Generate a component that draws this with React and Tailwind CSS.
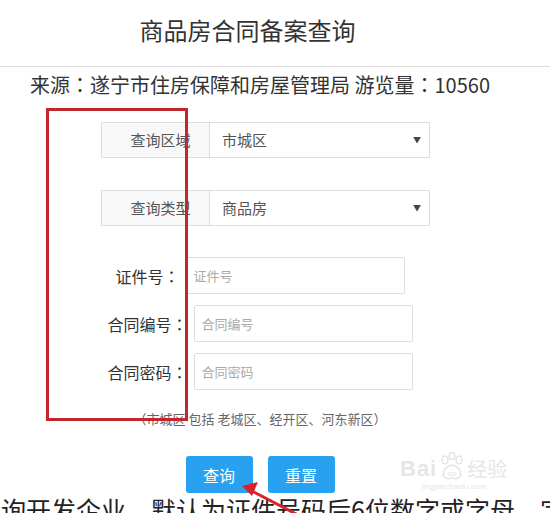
import React from "react"

const font = { fontFamily: '"Noto Sans CJK SC", "Noto Sans", sans-serif' }

// centred fullwidth colon, as in the screenshot's font
const Colon = () => <span style={{ fontFamily: '"Noto Sans CJK JP", sans-serif' }}>：</span>

const SelectRow = ({ label, value, className = "" }) => (
  <div className={`ml-[101px] flex h-[36px] w-[329px] text-[15px] text-[#555] ${className}`}>
    <div className="flex w-[109px] items-center justify-center border border-[#ddd] bg-[#f8f8f8] pl-[10px]">
      {label}
    </div>
    <div className="-ml-px flex flex-1 items-center justify-between border border-[#ddd] bg-white pl-[12px] pr-[8px]">
      <span>{value}</span>
      <span className="text-[8px] text-[#444]">▼</span>
    </div>
  </div>
)

const InputRow = ({ label, placeholder, className = "" }) => (
  <div className={`flex items-center justify-center gap-[6px] ${className}`}>
    <span className="text-[16px] text-[#333]">
      {label}
      <Colon />
    </span>
    <div className="flex h-[37px] w-[219px] items-center rounded-[2px] border border-[#ddd] bg-white px-[7px] text-left text-[13px] text-[#aaa]">
      {placeholder}
    </div>
  </div>
)

export default function App() {
  return (
    <div className="relative h-[513px] w-[550px] overflow-hidden bg-white" style={font}>
      {/* Header */}
      <div className="box-border h-[67px] border-b border-[#ddd]">
        <div className="w-[520px] pr-[25px] pt-[12px] text-center text-[24px] leading-[36px] text-[#333]">
          商品房合同备案查询
        </div>
      </div>

      <div className="w-[520px]">
        <div className="mt-[4px] text-center text-[20px] leading-[28px] text-[#333]">
          来源<Colon />遂宁市住房保障和房屋管理局 游览量<Colon />10560
        </div>

        <SelectRow label="查询区域" value="市城区" className="mt-[23px]" />
        <SelectRow label="查询类型" value="商品房" className="mt-[32px]" />

        <InputRow label="证件号" placeholder="证件号" className="mt-[31px]" />
        <InputRow label="合同编号" placeholder="合同编号" className="mt-[11px]" />
        <InputRow label="合同密码" placeholder="合同密码" className="mt-[11px]" />

        <div className="mt-[19px] text-center text-[13px] leading-[20px] text-[#666]">
          （市城区 包括 老城区、经开区、河东新区）
        </div>

        <div className="mt-[27px] flex justify-center gap-[15px]">
          <button className="h-[37px] w-[67px] rounded-[3px] bg-[#28a1f1] text-[16px] text-white">查询</button>
          <button className="h-[37px] w-[67px] rounded-[3px] bg-[#28a1f1] text-[16px] text-white">重置</button>
        </div>
      </div>

      <div className="whitespace-nowrap pl-[1px] text-[25px] leading-[32px] text-[#222]">
        询开发企业，默认为证件号码后6位数字或字母，字
      </div>

      {/* annotation: red box */}
      <div className="absolute left-[46px] top-[108px] h-[313px] w-[142px] border-[3px] border-[#c1272d]" />

      {/* annotation: red arrow */}
      <svg className="absolute left-0 top-0" width="550" height="513" viewBox="0 0 550 513">
        <line x1="298" y1="515" x2="250" y2="490" stroke="#d9232b" strokeWidth="3" />
        <polygon points="242,486 258,482 252,496" fill="#d9232b" />
      </svg>

      {/* watermark */}
      <div className="absolute left-[400px] top-[452px] flex flex-col items-center text-[#e6e6e6]">
        <div className="flex items-end gap-[2px]">
          <span className="text-[22px] font-bold leading-[26px] tracking-[1px]" style={{ fontFamily: '"Liberation Sans", sans-serif' }}>Bai</span>
          <svg width="26" height="30" viewBox="0 0 26 30">
            <g fill="none" stroke="#e4e4e4" strokeWidth="1.5">
              <ellipse cx="6" cy="8" rx="3" ry="4" />
              <ellipse cx="13" cy="4" rx="3" ry="3.5" />
              <ellipse cx="20" cy="8" rx="3" ry="4" />
              <path d="M4 24 Q5 14 13 13 Q21 14 22 24 Q18 28 13 26 Q8 28 4 24 Z" />
            </g>
            <text x="13" y="24" textAnchor="middle" fontSize="8" fill="#e4e4e4" fontFamily="Liberation Sans">du</text>
          </svg>
          <span className="text-[20px] leading-[26px]">经验</span>
        </div>
        <span className="text-[8px] leading-[10px]" style={{ fontFamily: '"Liberation Sans", sans-serif' }}>jingyan.baidu.com</span>
      </div>
    </div>
  )
}
